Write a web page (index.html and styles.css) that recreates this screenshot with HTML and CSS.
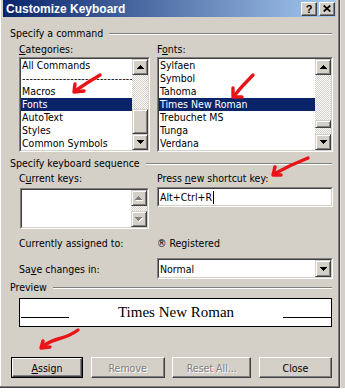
FILE: index.html
```html
<!DOCTYPE html>
<html>
<head>
<meta charset="utf-8">
<title>Customize Keyboard</title>
<link rel="stylesheet" href="styles.css">
</head>
<body>
<div class="screen">
  <div class="window">
    <div class="titlebar">
      <span class="title">Customize Keyboard</span>
      <div class="tbtns">
        <span class="tbtn help">?</span>
        <span class="tbtn"><svg width="8" height="7" viewBox="0 0 8 7"><path d="M0.7 0.5L7.3 6.5M7.3 0.5L0.7 6.5" stroke="#000" stroke-width="1.7"/></svg></span>
      </div>
    </div>
    <div class="content">
      <div class="group g1"><span>Specify a command</span><i class="etch"></i></div>
      <div class="cols labels">
        <span><u>C</u>ategories:</span>
        <span>F<u>o</u>nts:</span>
      </div>
      <div class="cols lists">
        <div class="sunken list">
          <div class="in">
            <ul class="items">
              <li>All Commands</li>
              <li class="dash">------------------------------</li>
              <li>Macros</li>
              <li class="sel">Fonts</li>
              <li>AutoText</li>
              <li>Styles</li>
              <li>Common Symbols</li>
            </ul>
            <div class="vscroll">
              <span class="raised sbtn"><svg width="7" height="4" viewBox="0 0 7 4"><path d="M3 0h1v1h1v1h1v1h1v1H0V3h1V2h1V1h1z"/></svg></span>
              <span class="track"></span>
              <span class="raised thumb cat"></span>
              <span class="raised sbtn"><svg width="7" height="4" viewBox="0 0 7 4"><path d="M0 0h7v1H6v1H5v1H4v1H3V3H2V2H1V1H0z"/></svg></span>
            </div>
          </div>
        </div>
        <div class="sunken list">
          <div class="in">
            <ul class="items">
              <li>Sylfaen</li>
              <li>Symbol</li>
              <li>Tahoma</li>
              <li class="sel">Times New Roman</li>
              <li>Trebuchet MS</li>
              <li>Tunga</li>
              <li>Verdana</li>
            </ul>
            <div class="vscroll">
              <span class="raised sbtn"><svg width="7" height="4" viewBox="0 0 7 4"><path d="M3 0h1v1h1v1h1v1h1v1H0V3h1V2h1V1h1z"/></svg></span>
              <span class="track"></span>
              <span class="raised thumb fnt"></span>
              <span class="track tail"></span>
              <span class="raised sbtn"><svg width="7" height="4" viewBox="0 0 7 4"><path d="M0 0h7v1H6v1H5v1H4v1H3V3H2V2H1V1H0z"/></svg></span>
            </div>
          </div>
        </div>
      </div>

      <div class="group g2"><span>Specify keyboard sequence</span><i class="etch"></i></div>
      <div class="cols labels l2">
        <span>C<u>u</u>rrent keys:</span>
        <span>Press <u>n</u>ew shortcut key:</span>
      </div>
      <div class="cols keys">
        <div class="sunken keybox">
          <div class="in">
            <div class="keylist"></div>
            <div class="vscroll">
              <span class="raised sbtn dis"><svg width="8" height="5" viewBox="0 0 8 5"><path class="hl" d="M4 1h1v1h1v1h1v1h1v1H1V4h1V3h1V2h1z"/><path d="M3 0h1v1h1v1h1v1h1v1H0V3h1V2h1V1h1z"/></svg></span>
              <span class="track"></span>
              <span class="raised sbtn dis"><svg width="8" height="5" viewBox="0 0 8 5"><path class="hl" d="M1 1h7v1H7v1H6v1H5v1H4V4H3V3H2V2H1z"/><path d="M0 0h7v1H6v1H5v1H4v1H3V3H2V2H1V1H0z"/></svg></span>
            </div>
          </div>
        </div>
        <div class="sunken field">
          <div class="in"><span class="val">Alt+Ctrl+R</span><i class="caret"></i></div>
        </div>
      </div>

      <div class="cols row assigned">
        <span>Currently assigned to:</span>
        <span>® Registered</span>
      </div>
      <div class="cols row save">
        <span>Sa<u>v</u>e changes in:</span>
        <div class="sunken combo">
          <div class="in">
            <span class="val">Normal</span>
            <span class="raised dbtn"><svg width="7" height="4" viewBox="0 0 7 4"><path d="M0 0h7v1H6v1H5v1H4v1H3V3H2V2H1V1H0z"/></svg></span>
          </div>
        </div>
      </div>

      <div class="group g3"><span>Preview</span><i class="etch"></i></div>
      <div class="preview">
        <i class="pline"></i>
        <span class="ptext">Times New Roman</span>
        <i class="pline"></i>
      </div>

      <div class="buttons">
        <span class="default"><span class="btn"><u>A</u>ssign</span></span>
        <span class="btn off w74">Remove</span>
        <span class="btn off w79">Reset All...</span>
        <span class="btn w73">Close</span>
      </div>
    </div>
  </div>
  <div class="strip"></div>
</div>

<svg class="marks" width="345" height="392" viewBox="0 0 345 392">
  <g fill="none" stroke="#e8141a" stroke-width="3.4" stroke-linecap="round" stroke-linejoin="round">
    <path d="M100 75Q88 82 75 91"/>
    <path d="M75 84L74 92L84 91"/>
    <path d="M253 75Q242 86 234 96"/>
    <path d="M233 88L233 97L242 97"/>
    <path d="M308 158Q290 165 274 174"/>
    <path d="M275 167L273 175L281 175"/>
    <path d="M78 330Q70 336 58 339Q48 342 42 347"/>
    <path d="M43 341L41 348L50 347"/>
  </g>
</svg>
</body>
</html>
```

FILE: styles.css
```css
* {
  box-sizing: border-box;
  margin: 0;
  padding: 0;
}

html, body {
  background: #fff;
}

body {
  width: 345px;
  height: 392px;
  overflow: hidden;
  position: relative;
  font-family: "DejaVu Sans Condensed", "DejaVu Sans", "Liberation Sans", sans-serif;
  font-size: 10.5px;
  color: #000;
}

u {
  text-decoration: underline;
  text-underline-offset: 1px;
}

.screen {
  display: flex;
  height: 388px;
}

.window {
  width: 340px;
  height: 388px;
  background: #d4d0c8;
  padding: 0 3px 3px;
  border-right: 1px solid #404040;
  border-bottom: 1px solid #404040;
  box-shadow: inset -1px -1px #808080, inset 1px 0 #fff;
  display: flex;
  flex-direction: column;
}

.strip {
  flex: 1;
  background: #d4d0c8;
  border-left: 1px solid #e4e2dc;
}

/* title bar */
.titlebar {
  height: 17px;
  background: linear-gradient(to right, #0a246a, #a6caf0);
  display: flex;
  align-items: center;
  justify-content: space-between;
  padding: 0 1px 0 3px;
}

.title {
  color: #fff;
  font: bold 12px "Liberation Sans", Arial, sans-serif;
}

.tbtns {
  display: flex;
  gap: 2px;
}

.tbtn {
  width: 16px;
  height: 14px;
  display: flex;
  align-items: center;
  justify-content: center;
  background: #d4d0c8;
  border: 1px solid;
  border-color: #fff #404040 #404040 #fff;
  box-shadow: inset -1px -1px #808080;
  font: bold 11px "Liberation Sans", Arial, sans-serif;
  line-height: 12px;
}

/* generic 3D */
.raised {
  display: flex;
  align-items: center;
  justify-content: center;
  background: #d4d0c8;
  border: 1px solid;
  border-color: #d4d0c8 #404040 #404040 #d4d0c8;
  box-shadow: inset 1px 1px #fff, inset -1px -1px #808080;
}

.sunken {
  border: 1px solid;
  border-color: #808080 #fff #fff #808080;
}

.sunken > .in {
  height: 100%;
  border: 1px solid;
  border-color: #404040 #d4d0c8 #d4d0c8 #404040;
  background: #fff;
  display: flex;
}

/* layout */
.content {
  padding: 0 4px 0 7px;
  display: flex;
  flex-direction: column;
}

.group {
  display: flex;
  align-items: center;
  gap: 6px;
  height: 13px;
  line-height: 13px;
  white-space: nowrap;
}

.etch {
  flex: 1;
  height: 2px;
  border-top: 1px solid #808080;
  border-bottom: 1px solid #fff;
}

.g1 { margin-top: 10px; }
.g2 { margin-top: 5px; }
.g3 { margin-top: 2px; }

.cols {
  display: grid;
  grid-template-columns: 131px 176px;
  column-gap: 7px;
  margin-left: 9px;
}

.labels {
  margin-top: 3px;
  height: 13px;
  line-height: 13px;
}

.l2 { margin-top: 2px; }

.lists {
  margin-top: 1px;
}

.list {
  height: 95px;
}

.items {
  flex: 1;
  list-style: none;
  overflow: hidden;
  min-width: 0;
}

.items li {
  height: 13px;
  line-height: 13px;
  padding-left: 1px;
  white-space: nowrap;
}

.items li.dash {
  letter-spacing: 0.3px;
}

.items li.sel {
  background: #0a246a;
  color: #fff;
}

.vscroll {
  width: 16px;
  display: flex;
  flex-direction: column;
}

.sbtn {
  height: 16px;
  flex: none;
}

.track {
  flex: 1;
  background: repeating-conic-gradient(#d4d0c8 0 25%, #fff 0 50%) 0 0 / 2px 2px;
}

.track.tail {
  flex: none;
  height: 6px;
}

.thumb {
  flex: none;
}

.thumb.cat { height: 25px; }
.thumb.fnt { height: 8px; }

.sbtn.dis svg path { fill: #808080; }
.sbtn.dis svg path.hl { fill: #fff; }

/* keyboard sequence */
.keys {
  margin-top: 2px;
  height: 42px;
  align-items: start;
}

.keybox {
  margin: 1px 1px 0 1px;
  height: 41px;
}

.keylist {
  flex: 1;
}

.field {
  height: 20px;
}

.field .in,
.combo .in {
  align-items: center;
  padding-left: 1px;
}

.val {
  white-space: nowrap;
}

.caret {
  width: 1px;
  height: 13px;
  background: #000;
  margin-left: 1px;
}

.row {
  align-items: center;
}

.assigned {
  margin-top: 8px;
  height: 13px;
  line-height: 13px;
}

.save {
  margin-top: 8px;
  height: 21px;
}

.combo {
  height: 21px;
}

.combo .in {
  justify-content: space-between;
}

.dbtn {
  width: 16px;
  height: 17px;
}

/* preview */
.preview {
  margin: 4px 0 0 9px;
  height: 29px;
  border: 1px solid #000;
  background: #fff;
  display: grid;
  grid-template-columns: 48px 1fr 48px;
  padding: 0 0 0 1px;
}

.pline {
  align-self: end;
  margin-bottom: 8px;
  border-bottom: 1px solid #000;
}

.ptext {
  align-self: end;
  margin-bottom: 5px;
  text-align: center;
  font: 15px "Liberation Serif", "Times New Roman", serif;
  line-height: 17px;
}

/* buttons */
.buttons {
  margin: 30px 0 0 1px;
  display: flex;
  justify-content: space-between;
  height: 21px;
}

.btn {
  display: flex;
  align-items: center;
  justify-content: center;
  height: 21px;
  background: #d4d0c8;
  border: 1px solid;
  border-color: #fff #404040 #404040 #fff;
  box-shadow: inset -1px -1px #808080;
}

.default {
  border: 1px solid #000;
  width: 72px;
  height: 21px;
}

.default .btn {
  height: 19px;
  width: 70px;
}

.w74 { width: 74px; }
.w79 { width: 79px; }
.w73 { width: 73px; }

.btn.off {
  color: #808080;
  text-shadow: 1px 1px #fff;
}

/* annotation overlay */
.marks {
  position: absolute;
  left: 0;
  top: 0;
  pointer-events: none;
}
```
